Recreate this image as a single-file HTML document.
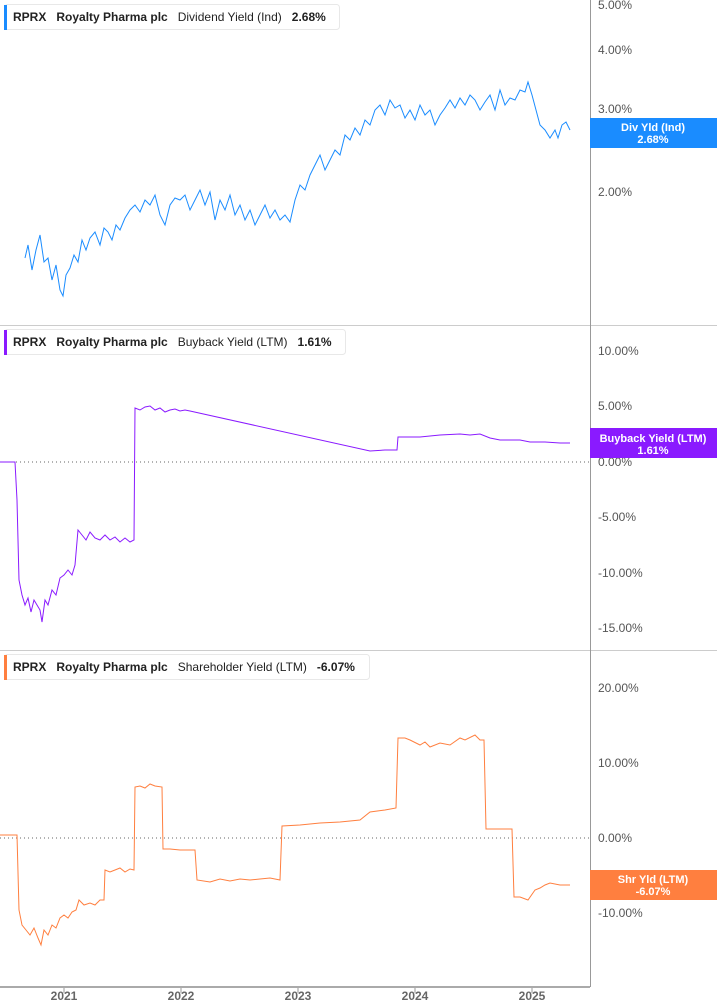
<!DOCTYPE html>
<html><head><meta charset="utf-8"><style>
html,body{margin:0;padding:0;background:#fff;}
svg{display:block;font-family:"Liberation Sans",sans-serif;}
.ax{font-size:12px;fill:#555;}
.hd{font-size:12px;fill:#222;}
</style></head><body>
<svg width="717" height="1005" viewBox="0 0 717 1005">
<!-- separators -->
<line x1="0" y1="325.5" x2="717" y2="325.5" stroke="#ccc"/>
<line x1="0" y1="650.5" x2="717" y2="650.5" stroke="#ccc"/>
<line x1="590.5" y1="0" x2="590.5" y2="987" stroke="#999"/>
<line x1="0" y1="987" x2="590" y2="987" stroke="#aaa" stroke-width="2"/>
<!-- x ticks -->
<g stroke="#999"><line x1="64" y1="988" x2="64" y2="993"/><line x1="181" y1="988" x2="181" y2="993"/><line x1="298" y1="988" x2="298" y2="993"/><line x1="415" y1="988" x2="415" y2="993"/><line x1="532" y1="988" x2="532" y2="993"/></g>
<g font-size="12" font-weight="bold" fill="#666" text-anchor="middle"><text x="64" y="1000">2021</text><text x="181" y="1000">2022</text><text x="298" y="1000">2023</text><text x="415" y="1000">2024</text><text x="532" y="1000">2025</text></g>
<!-- y labels -->
<g class="ax">
<text x="598" y="9">5.00%</text><text x="598" y="54">4.00%</text><text x="598" y="113">3.00%</text><text x="598" y="196">2.00%</text>
<text x="598" y="355">10.00%</text><text x="598" y="410">5.00%</text><text x="598" y="466">0.00%</text><text x="598" y="521">-5.00%</text><text x="598" y="577">-10.00%</text><text x="598" y="632">-15.00%</text>
<text x="598" y="692">20.00%</text><text x="598" y="767">10.00%</text><text x="598" y="842">0.00%</text><text x="598" y="917">-10.00%</text>
</g>
<line x1="0" y1="462" x2="590" y2="462" stroke="#666" stroke-dasharray="1,3"/>
<line x1="0" y1="838" x2="590" y2="838" stroke="#666" stroke-dasharray="1,3"/>
<!-- lines -->
<polyline fill="none" stroke="#1a8cff" stroke-width="1" points="25,258 28,245 32,270 36,250 40,235 44,262 48,258 52,280 56,265 60,290 63,296 66,275 70,268 74,255 78,262 82,240 86,250 90,238 95,232 100,245 104,228 108,232 112,240 116,225 120,230 125,218 130,210 135,205 140,212 145,200 150,205 155,195 160,215 165,225 170,205 175,198 180,200 185,195 190,210 195,200 200,190 205,205 210,192 215,220 220,200 225,210 230,195 235,215 240,205 245,220 250,210 255,225 260,215 265,205 270,218 275,210 280,220 285,215 290,222 295,200 300,185 305,190 310,175 315,165 320,155 325,170 330,160 335,150 340,155 345,135 350,140 355,128 360,135 365,120 370,125 375,110 380,105 385,115 390,100 395,108 400,105 405,118 410,110 415,120 420,105 425,115 430,110 435,125 440,115 445,108 450,100 455,108 460,98 465,105 470,95 475,100 480,110 485,102 490,95 495,110 500,90 505,105 510,98 515,100 520,90 525,92 528,82 532,95 536,110 540,125 545,130 550,138 555,130 558,138 562,125 566,122 570,130"/>
<polyline fill="none" stroke="#8a1aff" stroke-width="1" points="0,462 15,462 17,500 19,580 22,595 25,605 28,598 31,612 34,600 37,605 40,610 42,622 45,600 48,605 52,590 56,595 60,578 64,575 68,570 72,575 75,565 78,530 82,535 86,540 90,532 95,538 100,540 105,535 110,540 115,537 120,542 125,538 130,542 134,540 135,408 140,410 145,407 150,406 155,410 160,408 165,412 170,410 175,409 180,411 185,410 190,411 370,451 385,450 397,450 398,437 420,437 440,435 460,434 470,435 480,434 490,438 500,440 520,440 530,442 545,442 560,443 570,443"/>
<polyline fill="none" stroke="#ff7f3f" stroke-width="1" points="0,835 17,835 19,910 22,925 26,930 30,935 34,928 38,938 41,945 44,930 48,935 52,925 56,928 60,918 64,915 68,918 72,912 76,910 79,900 84,905 90,903 95,905 100,900 104,900 105,870 110,872 115,870 120,868 125,872 130,869 134,870 135,787 140,786 145,788 150,784 155,786 162,787 163,849 170,849 180,850 195,850 197,880 210,882 220,879 230,881 240,879 250,880 260,879 270,878 280,880 282,826 300,825 320,823 340,822 360,820 370,812 385,810 396,808 398,738 405,738 410,740 420,745 425,742 430,747 440,743 450,745 460,738 465,740 475,735 480,740 484,740 486,829 512,829 514,897 520,897 528,900 535,890 540,888 545,885 550,883 560,885 570,885"/>
<!-- value tags -->
<rect x="590" y="118" width="127" height="30" fill="#1a8cff"/>
<text x="653" y="131" text-anchor="middle" font-size="11" font-weight="bold" fill="#fff">Div Yld (Ind)</text>
<text x="653" y="143" text-anchor="middle" font-size="11" font-weight="bold" fill="#fff">2.68%</text>
<rect x="590" y="428" width="127" height="30" fill="#8a1aff"/>
<text x="653" y="442" text-anchor="middle" font-size="11" font-weight="bold" fill="#fff">Buyback Yield (LTM)</text>
<text x="653" y="454" text-anchor="middle" font-size="11" font-weight="bold" fill="#fff">1.61%</text>
<rect x="590" y="870" width="127" height="30" fill="#ff7f3f"/>
<text x="653" y="883" text-anchor="middle" font-size="11" font-weight="bold" fill="#fff">Shr Yld (LTM)</text>
<text x="653" y="895" text-anchor="middle" font-size="11" font-weight="bold" fill="#fff">-6.07%</text>
<!-- headers -->
<rect x="4.5" y="4.5" width="335" height="25" rx="3" fill="#fff" stroke="#e8e8e8"/>
<rect x="4" y="5" width="3" height="25" fill="#1a8cff"/>
<text x="13" y="21" class="hd"><tspan font-weight="bold">RPRX</tspan><tspan dx="10" font-weight="bold">Royalty Pharma plc</tspan><tspan dx="10">Dividend Yield (Ind)</tspan><tspan dx="10" font-weight="bold">2.68%</tspan></text>
<rect x="4.5" y="329.5" width="341" height="25" rx="3" fill="#fff" stroke="#e8e8e8"/>
<rect x="4" y="330" width="3" height="25" fill="#8a1aff"/>
<text x="13" y="346" class="hd"><tspan font-weight="bold">RPRX</tspan><tspan dx="10" font-weight="bold">Royalty Pharma plc</tspan><tspan dx="10">Buyback Yield (LTM)</tspan><tspan dx="10" font-weight="bold">1.61%</tspan></text>
<rect x="4.5" y="654.5" width="365" height="25" rx="3" fill="#fff" stroke="#e8e8e8"/>
<rect x="4" y="655" width="3" height="25" fill="#ff7f3f"/>
<text x="13" y="671" class="hd"><tspan font-weight="bold">RPRX</tspan><tspan dx="10" font-weight="bold">Royalty Pharma plc</tspan><tspan dx="10">Shareholder Yield (LTM)</tspan><tspan dx="10" font-weight="bold">-6.07%</tspan></text>
</svg>
</body></html>
